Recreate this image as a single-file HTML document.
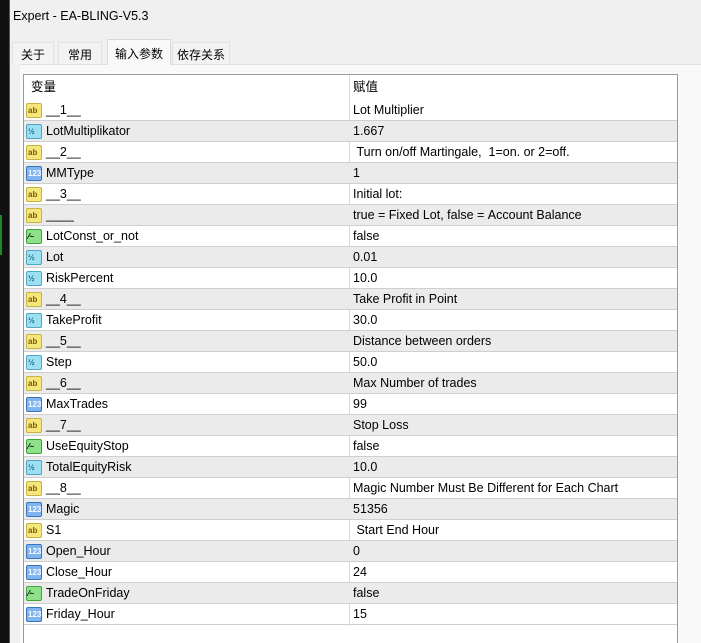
<!DOCTYPE html>
<html><head><meta charset="utf-8"><style>
*{margin:0;padding:0;box-sizing:border-box}
body{width:701px;height:643px;overflow:hidden;background:#f0f0f0;font-family:"Liberation Sans","Noto Sans CJK SC",sans-serif;font-size:12.5px;color:#000;position:relative}
.strip{position:absolute;left:0;top:0;width:9px;height:643px;background:#111}
.win{position:absolute;left:9px;top:0;right:0;bottom:0;background:#f0f0f0;border-left:1px solid #555}
.title{position:absolute;left:3px;top:9px;font-size:12.5px}
.tab{position:absolute;top:42px;height:22px;font-size:12px;padding-top:3px;text-align:center;background:#f3f3f3;border:1px solid #e2e2e2;border-bottom:none}
.tabsel{background:#f9f9f9;border:1px solid #d9d9d9;border-bottom:none;top:39px;height:26px;padding-top:5px}
.panel{position:absolute;left:10px;top:64px;width:682px;height:579px;background:#f9f9f9;border-top:1px solid #e0e0e0}
.tbl{position:absolute;left:23px;top:74px;width:655px;height:569px;background:#fff;border:1px solid #9a9a9a;border-bottom:none}
.row{position:absolute;left:0;width:653px;height:21px;border-bottom:1px solid #cfcfcf;line-height:21px}
.g{background:#ebebeb}
.n{position:absolute;left:22px}
.v{position:absolute;left:329px}
.div{position:absolute;left:325px;top:0;width:1px;height:551px;background:#d8d8d8}
.ic{position:absolute;left:2px;top:3px;width:16px;height:15px;border-radius:2px;font-size:8px;line-height:13px;text-align:left;padding-left:1px;font-weight:bold}
.ab{background:#f3e67a;border:1px solid #c9b23e;color:#7a5a00}
.vz{background:#9fe0f0;border:1px solid #4aa8c8;color:#1a6c90}
.n123{background:#7fb4ee;border:1px solid #3c74c0;color:#fff}
.bl{background:#8ee08a;border:1px solid #3ea63a}
</style></head><body>
<div class="strip"></div>
<div style="position:absolute;left:0;top:215px;width:8px;height:40px;border-left:2px solid #1c8a1c"></div>
<div class="win">
<div class="title">Expert - EA-BLING-V5.3</div>
<div class="panel"></div>
<div class="tab" style="left:2px;width:42px">关于</div>
<div class="tab" style="left:48px;width:44px">常用</div>
<div class="tab tabsel" style="left:97px;width:64px">输入参数</div>
<div class="tab" style="left:162px;width:58px">依存关系</div>
</div>
<div class="tbl">
<div class="div"></div>
<div class="row" style="top:2px;border-bottom:none;height:22px"><span class="n" style="left:7px">变量</span><span class="v">赋值</span></div>
<div id="rows"></div>
</div>
<script>
var d=[["ab","__1__","Lot Multiplier"],["vz","LotMultiplikator","1.667"],["ab","__2__"," Turn on/off Martingale,  1=on. or 2=off."],["n123","MMType","1"],["ab","__3__","Initial lot:"],["ab","____","true = Fixed Lot, false = Account Balance"],["bl","LotConst_or_not","false"],["vz","Lot","0.01"],["vz","RiskPercent","10.0"],["ab","__4__","Take Profit in Point"],["vz","TakeProfit","30.0"],["ab","__5__","Distance between orders"],["vz","Step","50.0"],["ab","__6__","Max Number of trades"],["n123","MaxTrades","99"],["ab","__7__","Stop Loss"],["bl","UseEquityStop","false"],["vz","TotalEquityRisk","10.0"],["ab","__8__","Magic Number Must Be Different for Each Chart"],["n123","Magic","51356"],["ab","S1"," Start End Hour"],["n123","Open_Hour","0"],["n123","Close_Hour","24"],["bl","TradeOnFriday","false"],["n123","Friday_Hour","15"]];
var t={ab:"ab",vz:"½",n123:"123",bl:"⁄~"};
var h="";d.forEach(function(r,i){h+='<div class="row'+(i%2?' g':'')+'" style="top:'+(25+i*21)+'px"><span class="ic '+r[0]+'">'+t[r[0]]+'</span><span class="n">'+r[1]+'</span><span class="v">'+r[2].replace(/ /g,"&nbsp;")+'</span></div>'});
document.getElementById("rows").outerHTML=h;
</script>
</body></html>
